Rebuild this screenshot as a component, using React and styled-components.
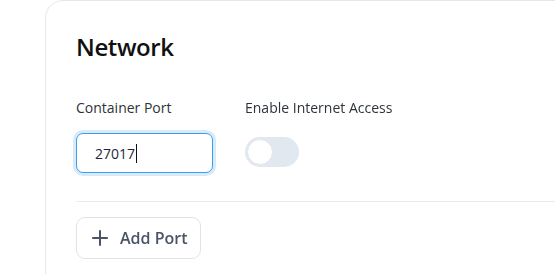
import React, { useState } from "react";
import styled, { createGlobalStyle } from "styled-components";
import { Plus } from "lucide-react";

const GlobalStyle = createGlobalStyle`
  html, body {
    margin: 0;
    padding: 0;
    background: #ffffff;
    overflow: hidden;
  }
  body {
    font-family: "Open Sans", "Noto Sans", sans-serif;
    -webkit-font-smoothing: antialiased;
  }
`;

const Page = styled.div`
  width: 555px;
  height: 274px;
  overflow: hidden;
  padding-left: 45px;
  box-sizing: border-box;
`;

const Card = styled.section`
  width: 620px;
  min-height: 320px;
  box-sizing: border-box;
  background: #ffffff;
  border: 1px solid #e5e7eb;
  border-radius: 18px;
  padding: 30px 30px;
`;

const Heading = styled.h2`
  margin: 0 0 35px;
  font-size: 24px;
  line-height: 32px;
  font-weight: 600;
  letter-spacing: -0.4px;
  color: #111111;
`;

const Row = styled.div`
  display: flex;
  gap: 32px;
  align-items: flex-start;
`;

const Field = styled.div`
  display: flex;
  flex-direction: column;
`;

const Label = styled.label`
  font-size: 14px;
  line-height: 20px;
  color: #2d3338;
  margin-bottom: 15px;
`;

const InputShell = styled.div`
  width: 137px;
  height: 40px;
  box-sizing: border-box;
  display: flex;
  align-items: center;
  border: 1px solid ${(p) => (p.$focused ? "#3c9ee8" : "#dfe3ea")};
  border-radius: 7px;
  box-shadow: ${(p) => (p.$focused ? "0 0 0 3px #d6eafb" : "none")};
  padding: 0 12px 0 18px;
  background: #ffffff;
  cursor: text;
`;

const TextInput = styled.input`
  field-sizing: content;
  min-width: 1px;
  max-width: 100%;
  padding: 0;
  border: none;
  outline: none;
  background: transparent;
  font-family: "Open Sans", "Noto Sans", sans-serif;
  font-size: 14px;
  color: #1f2933;
  caret-color: transparent;
`;

const Caret = styled.span`
  width: 1px;
  height: 19px;
  margin-left: 1px;
  background: #111111;
  flex: none;
`;

const SwitchTrack = styled.button`
  width: 54px;
  height: 30px;
  margin-top: 4px;
  padding: 2px;
  border: none;
  border-radius: 999px;
  background: ${(p) => (p.$on ? "#3c9ee8" : "#e2e8f0")};
  display: flex;
  justify-content: ${(p) => (p.$on ? "flex-end" : "flex-start")};
  align-items: center;
  cursor: pointer;
  box-sizing: border-box;
`;

const SwitchKnob = styled.span`
  width: 26px;
  height: 26px;
  border-radius: 50%;
  background: #ffffff;
  border: 1px solid #e3e8ef;
  box-sizing: border-box;
`;

const Divider = styled.hr`
  margin: 28px 0 15px;
  border: none;
  border-top: 1px solid #e8eaee;
`;

const AddButton = styled.button`
  display: inline-flex;
  align-items: center;
  gap: 8px;
  height: 42px;
  box-sizing: border-box;
  padding: 0 12px 0 11px;
  background: #ffffff;
  border: 1px solid #dfe3ea;
  border-radius: 9px;
  font-family: "Open Sans", "Noto Sans", sans-serif;
  font-size: 16px;
  font-weight: 600;
  letter-spacing: 0;
  white-space: nowrap;
  color: #4a5466;
  cursor: pointer;
  svg {
    flex: none;
  }
`;

export default function App() {
  const [port, setPort] = useState("27017");
  const [internet, setInternet] = useState(false);
  const [focused, setFocused] = useState(true);
  return (
    <>
      <GlobalStyle />
      <Page>
        <Card>
          <Heading>Network</Heading>
          <Row>
            <Field>
              <Label htmlFor="port">Container Port</Label>
              <InputShell $focused={focused}>
                <TextInput
                  id="port"
                  value={port}
                  autoFocus
                  onFocus={() => setFocused(true)}
                  onBlur={() => setFocused(false)}
                  onChange={(e) => setPort(e.target.value)}
                />
                {focused && <Caret />}
              </InputShell>
            </Field>
            <Field>
              <Label>Enable Internet Access</Label>
              <SwitchTrack
                role="switch"
                aria-checked={internet}
                $on={internet}
                onClick={() => setInternet(!internet)}
              >
                <SwitchKnob />
              </SwitchTrack>
            </Field>
          </Row>
          <Divider />
          <AddButton>
            <Plus size={24} strokeWidth={2} />
            Add Port
          </AddButton>
        </Card>
      </Page>
    </>
  );
}
